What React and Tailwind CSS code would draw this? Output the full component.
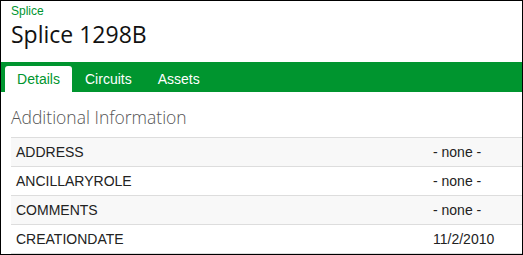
export default function App() {
  const rows = [
    { k: "ADDRESS", v: "- none -" },
    { k: "ANCILLARYROLE", v: "- none -" },
    { k: "COMMENTS", v: "- none -" },
    { k: "CREATIONDATE", v: "11/2/2010" },
  ];

  return (
    <div className="w-[523px] h-[255px] border border-black bg-white overflow-hidden flex flex-col font-['Liberation_Sans',Arial,sans-serif]">
      {/* Header */}
      <div className="h-[62px] pl-[10px] pt-[3px]">
        <div className="text-[12px] leading-[14px] text-[#00952f]">Splice</div>
        <div className="text-[23px] leading-[32px] text-[#111] font-['Open_Sans',sans-serif]">Splice 1298B</div>
      </div>

      {/* Tabs */}
      <div className="h-[30px] bg-[#00952f] flex items-end pl-[4px]">
        <div className="h-[26px] w-[67px] bg-white rounded-t-[3px] flex items-center justify-center text-[14px] text-[#00952f]">
          Details
        </div>
        <div className="h-[26px] px-[13px] flex items-center text-[14px] text-white">Circuits</div>
        <div className="h-[26px] px-[13px] flex items-center text-[14px] text-white">Assets</div>
      </div>

      {/* Section */}
      <div className="pl-[10px] pt-[13px]">
        <div className="text-[17.5px] leading-[24px] text-[#555] font-light font-['Open_Sans',sans-serif] mb-[8px]">
          Additional Information
        </div>
        <div className="border-t border-[#ddd]">
          {rows.map((r, i) => (
            <div
              key={r.k}
              className={`h-[29px] flex items-center border-b border-[#ddd] text-[14px] text-[#222] ${
                i % 2 === 0 ? "bg-[#f8f8f8]" : "bg-white"
              }`}
            >
              <div className="w-[422px] pl-[5px]">{r.k}</div>
              <div>{r.v}</div>
            </div>
          ))}
        </div>
      </div>
    </div>
  );
}
